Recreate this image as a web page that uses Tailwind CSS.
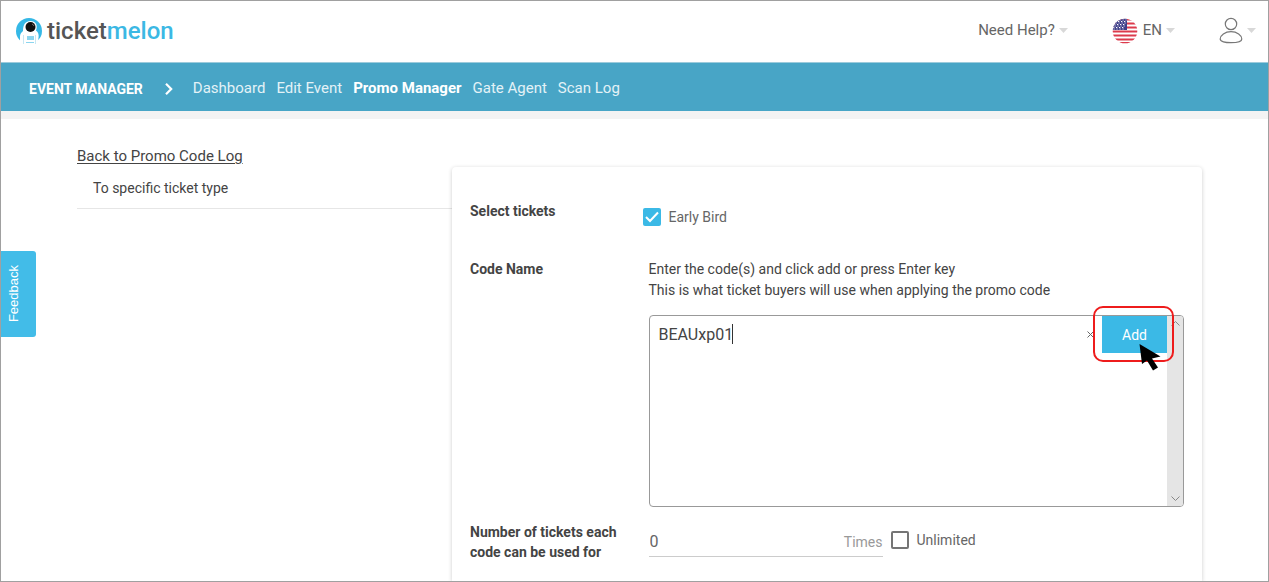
<!DOCTYPE html>
<html lang="en">
<head>
<meta charset="utf-8">
<meta name="viewport" content="width=device-width, initial-scale=1">
<title>Ticketmelon – Promo Manager</title>
<script src="https://cdn.jsdelivr.net/npm/@tailwindcss/browser@4"></script>
</head>
<body class="relative flex min-h-screen flex-col border border-[#a0a0a0] bg-white font-[Roboto,sans-serif] text-sm text-[#444]">

<header class="flex h-[62px] shrink-0 items-center justify-between border-b border-[#9ccbdc] pr-3 pb-[2px] pl-[14px]">
  <a href="#" class="flex items-center gap-1" aria-label="ticketmelon">
    <svg class="size-7" viewBox="0 0 28 28" aria-hidden="true">
      <defs><clipPath id="disc"><path d="M0 0h28v19l-5 4v5H5v-4l-5-4z"/></clipPath></defs>
      <g clip-path="url(#disc)">
        <circle cx="14" cy="14" r="13" fill="#35b8e6"/>
        <path d="M5 28v-7q-.500-4.500 3-7C8 7.500 10.500 4 15.500 4c5.500 0 7.500 4.500 5.500 9.500 2.500 1.500 3 4.500 2.500 7.500L22 28z" fill="#fff"/>
      </g>
      <path d="M8.500 18v9M20.500 18v9" stroke="#c6e8f4" fill="none"/>
      <path d="M12 19h7v4h-7z" fill="#8bd5ef"/>
      <path d="M11 25.500h8" stroke="#8bd5ef"/>
      <circle cx="15.500" cy="10" r="5" fill="#111"/>
      <path d="M17 7q1.500.500 2 2" stroke="#777" fill="none"/>
    </svg>
    <span class="text-2xl leading-7 font-medium text-[#555]">ticket<span class="text-[#3bb8e4]">melon</span></span>
  </a>
  <div class="flex items-center">
    <button type="button" class="flex items-center gap-1 text-[15px] text-[#666]">Need Help?
      <svg class="h-[5px] w-[9px]" viewBox="0 0 9 5" aria-hidden="true"><path d="M0 0h9L4.500 5z" fill="#d8d8d8"/></svg>
    </button>
    <button type="button" class="ml-11 flex items-center gap-1 text-[15px] text-[#666]">
      <svg class="mr-px size-[26px]" viewBox="0 0 26 26" aria-hidden="true">
        <defs><clipPath id="flag"><circle cx="13" cy="13" r="12.300"/></clipPath></defs>
        <g clip-path="url(#flag)">
          <path d="M0 0h26v26H0z" fill="#fff"/>
          <path d="M0 1.500h26M0 5.500h26M0 9.500h26M0 13.500h26M0 17.500h26M0 21.500h26M0 25h26" stroke="#dc3a4c" stroke-width="2"/>
          <path d="M0 0h15v12H0z" fill="#40408a"/>
          <path d="M3 3.500h12M2 6.500h12M1 9.500h12" stroke="#fff" stroke-width="1.200" stroke-dasharray="1.300 1.700"/>
          <path d="M4.500 2h10M3.500 5h11M2.500 8h11M1.500 11h11" stroke="#d5d5e8" stroke-width="1" stroke-dasharray="1.200 1.800"/>
        </g>
      </svg>
      EN
      <svg class="h-[5px] w-[9px]" viewBox="0 0 9 5" aria-hidden="true"><path d="M0 0h9L4.500 5z" fill="#d8d8d8"/></svg>
    </button>
    <button type="button" class="ml-11 flex items-center gap-1" aria-label="Account">
      <svg class="h-[27px] w-6" viewBox="0 0 24 27" fill="none" stroke="#777" stroke-width="1.200" aria-hidden="true">
        <circle cx="12" cy="7" r="5.700"/>
        <path d="M12 14.700c6 0 10.800 3.800 10.800 7.300 0 2.700-5 3.700-10.800 3.700S1.200 24.700 1.200 22c0-3.500 4.800-7.300 10.800-7.300z"/>
      </svg>
      <svg class="h-[5px] w-[9px]" viewBox="0 0 9 5" aria-hidden="true"><path d="M0 0h9L4.500 5z" fill="#d8d8d8"/></svg>
    </button>
  </div>
</header>

<nav class="flex h-12 shrink-0 items-center bg-[#48a5c6] px-7 pt-1 text-[15px] text-[#e3f2f7]" aria-label="Event manager">
  <a href="#" class="mr-[22px] text-sm font-bold text-white">EVENT MANAGER</a>
  <svg class="mr-5 h-3 w-2" viewBox="0 0 8 12" fill="none" stroke="#fff" stroke-width="2.200" aria-hidden="true"><path d="M1 .800L6.200 6 1 11.200"/></svg>
  <div class="flex gap-[11px]">
    <a href="#">Dashboard</a>
    <a href="#">Edit Event</a>
    <a href="#" class="font-bold text-white" aria-current="page">Promo Manager</a>
    <a href="#">Gate Agent</a>
    <a href="#">Scan Log</a>
  </div>
</nav>
<div class="h-2 shrink-0 bg-[#f3f3f3]"></div>

<main class="grid flex-1 grid-cols-3 pr-[66px] pl-[76px]">
  <aside class="pt-[27px]">
    <a href="#" class="block text-[15px] leading-5 underline underline-offset-2">Back to Promo Code Log</a>
    <p class="border-b border-[#e6e6e6] px-4 pt-3 pb-[10px] leading-5">To specific ticket type</p>
  </aside>

  <form class="col-span-2 mt-12 grid grid-cols-4 content-start rounded-t bg-white px-[18px] pt-8 shadow-[0_1px_4px_rgba(0,0,0,0.2)]">
    <h2 class="pt-[2px] font-bold leading-5">Select tickets</h2>
    <div class="col-span-3 -ml-[6px] flex items-center gap-2 pt-2 text-[#666]">
      <span class="grid size-[18px]">
        <input id="early" type="checkbox" checked class="col-start-1 row-start-1 size-[18px] appearance-none rounded-[2px] bg-[#3bb9e6]">
        <svg class="pointer-events-none col-start-1 row-start-1 size-[18px]" viewBox="0 0 18 18" fill="none" stroke="#fff" stroke-width="2" aria-hidden="true"><path d="M3 9l4 4 8-8.500"/></svg>
      </span>
      <label for="early" class="leading-5">Early Bird</label>
    </div>

    <label for="codes" class="pt-8 font-bold leading-5">Code Name</label>
    <div class="col-span-3 pt-8">
      <p class="leading-[21px]">Enter the code(s) and click add or press Enter key</p>
      <p class="leading-[21px]">This is what ticket buyers will use when applying the promo code</p>
      <div class="relative mt-[14px] flex h-48 rounded border border-[#999]">
        <textarea id="codes" class="min-w-0 flex-1 resize-none rounded pt-[9px] pl-[9px] text-base leading-5 outline-none">BEAUxp01</textarea>
        <span class="absolute top-2 left-[82px] h-5 w-px bg-[#333]"></span>
        <button type="button" class="mt-[15px] mr-2 h-[7px] w-[7px]" aria-label="Clear code">
          <svg viewBox="0 0 7 7" fill="none" stroke="#666" aria-hidden="true"><path d="M.500.500l6 6M6.500.500l-6 6"/></svg>
        </button>
        <button type="button" class="h-[37px] w-[65px] bg-[#3bb9e6] text-white">Add</button>
        <div class="flex w-4 flex-col items-center justify-between rounded-r-[3px] bg-[#e5e5e5] py-1" aria-hidden="true">
          <svg class="h-[7px] w-[9px]" viewBox="0 0 9 7" fill="none" stroke="#888"><path d="M.500 5.500l4-4 4 4"/></svg>
          <svg class="h-[7px] w-[9px]" viewBox="0 0 9 7" fill="none" stroke="#888"><path d="M.500 1.500l4 4 4-4"/></svg>
        </div>
        <div class="pointer-events-none absolute -top-[10px] right-[9px] h-14 w-[81px] rounded-[10px] border-2 border-[#ee1c1c]"></div>
        <svg class="pointer-events-none absolute top-7 right-[22px] h-[28px] w-[22px]" viewBox="0 0 22 28" aria-hidden="true"><path d="M.500 0L3 20l5-3.500 6 10 5-3-6-9 8.500-2z" fill="#000"/></svg>
      </div>
    </div>

    <label for="uses" class="pt-[15px] font-bold leading-5">Number of tickets each code can be used for</label>
    <div class="col-span-3 flex items-start gap-2 pt-[18px] text-[#666]">
      <div class="flex w-[234px] items-end border-b border-[#ccc] pt-[5px] pb-[2px]">
        <input id="uses" type="text" inputmode="numeric" value="0" class="min-w-0 flex-1 pl-px text-base leading-6 outline-none">
        <span class="leading-6 text-[#999]">Times</span>
      </div>
      <div class="flex items-center gap-2 pt-[5px]">
        <input id="unlimited" type="checkbox" class="size-[18px] appearance-none rounded-[2px] border-2 border-[#757575]">
        <label for="unlimited" class="leading-5">Unlimited</label>
      </div>
    </div>
  </form>
</main>

<button type="button" class="absolute top-[250px] left-0 flex h-[86px] w-[35px] items-center justify-center rounded-r-[3px] bg-[#42bce8] font-['Liberation_Sans',sans-serif] text-[13px] text-white">
  <span class="rotate-180 pl-2 [writing-mode:vertical-rl]">Feedback</span>
</button>
</body>
</html>
